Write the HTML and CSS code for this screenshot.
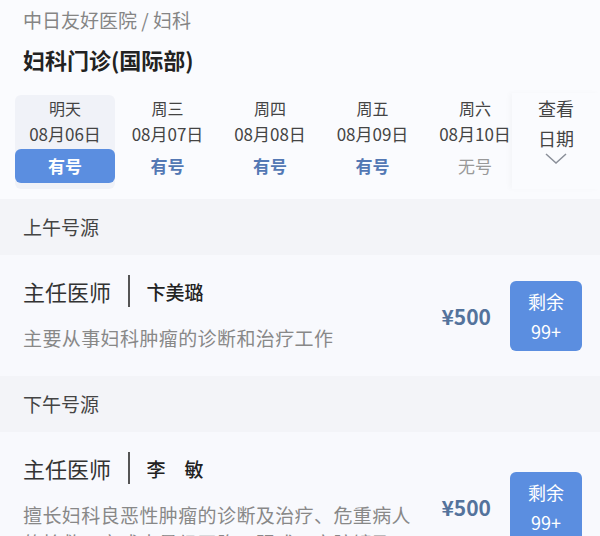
FILE: index.html
```html
<!DOCTYPE html>
<html lang="zh-CN">
  <head>
    <meta charset="UTF-8">
    <title>妇科门诊(国际部)</title>
    <meta name="viewport" content="width=device-width, initial-scale=1">
    <link rel="stylesheet" href="styles.css">
  </head>
  <body>
    <div class="top">
      <div class="crumb">中日友好医院 / 妇科</div>
      <h1 class="title">妇科门诊(国际部)</h1>

      <div class="dates">
        <div class="day-list">
          <div class="day active">
            <div class="week">明天</div>
            <div class="date">08月06日</div>
            <div class="status">有号</div>
          </div>
          <div class="day">
            <div class="week">周三</div>
            <div class="date">08月07日</div>
            <div class="status">有号</div>
          </div>
          <div class="day">
            <div class="week">周四</div>
            <div class="date">08月08日</div>
            <div class="status">有号</div>
          </div>
          <div class="day">
            <div class="week">周五</div>
            <div class="date">08月09日</div>
            <div class="status">有号</div>
          </div>
          <div class="day">
            <div class="week">周六</div>
            <div class="date">08月10日</div>
            <div class="status none">无号</div>
          </div>
        </div>
        <div class="more">
          <div>查看</div>
          <div>日期</div>
          <svg width="22" height="11" viewBox="0 0 22 11">
            <path d="M1 1 L11 10 L21 1" fill="none" stroke="#8a8f99" stroke-width="1.5"/>
          </svg>
        </div>
      </div>
    </div>

    <div class="section">上午号源</div>
    <div class="card">
      <div class="info">
        <div class="doctor">
          <span class="rank">主任医师</span>
          <span class="divider"></span>
          <span class="name">卞美璐</span>
        </div>
        <p class="desc">主要从事妇科肿瘤的诊断和治疗工作</p>
      </div>
      <div class="price">¥500</div>
      <button type="button" class="remain">剩余<br>99+</button>
    </div>

    <div class="section">下午号源</div>
    <div class="card">
      <div class="info">
        <div class="doctor">
          <span class="rank">主任医师</span>
          <span class="divider"></span>
          <span class="name">李　敏</span>
        </div>
        <p class="desc">擅长妇科良恶性肿瘤的诊断及治疗、危重病人的抢救，完成大量经开腹、阴式、宫腔镜及腹腔镜手术</p>
      </div>
      <div class="price">¥500</div>
      <button type="button" class="remain">剩余<br>99+</button>
    </div>
  </body>
</html>
```

FILE: styles.css
```css
body {
  margin: 0;
  background: #f8f9fd;
  font-family: "Noto Sans CJK SC", "Noto Sans", sans-serif;
  color: #333;
  overflow: hidden;
}

.top {
  background: #fafbfe;
  padding-top: 8px;
  padding-bottom: 10px;
}

.crumb {
  padding-left: 23px;
  font-size: 19px;
  line-height: 24px;
  color: #858585;
}

.title {
  margin: 12px 0 0;
  padding-left: 23px;
  font-size: 22px;
  line-height: 30px;
  font-weight: 700;
  color: #222;
}

.dates {
  display: flex;
  margin-top: 21px;
}

.day-list {
  flex: 1;
  display: flex;
  gap: 2.5px;
  padding-left: 15px;
  overflow: hidden;
}

.day {
  flex: none;
  width: 100px;
  text-align: center;
  border-radius: 6px;
}

.day.active {
  background: #f0f2f8;
}

.week {
  font-size: 16px;
  line-height: 26px;
  color: #444;
}

.date {
  font-size: 17px;
  line-height: 26px;
  color: #444;
}

.status {
  margin-top: 2px;
  height: 34px;
  line-height: 34px;
  font-size: 17px;
  font-weight: 700;
  color: #5378b4;
  border-radius: 6px;
}

.day.active .status {
  background: #5b8ee0;
  color: #fff;
}

.status.none {
  font-weight: 400;
  color: #999;
}

.more {
  flex: none;
  width: 88px;
  height: 96px;
  margin-top: -2px;
  text-align: center;
  font-size: 18px;
  line-height: 30px;
  color: #444;
  background: #fafbfe;
  box-shadow: -3px 0 5px rgba(0, 0, 0, 0.025);
}

.more svg {
  display: block;
  margin: 0 auto;
}

.section {
  height: 56px;
  line-height: 56px;
  padding-left: 23px;
  font-size: 19px;
  color: #444;
  background: #f3f4f8;
}

.card {
  display: flex;
  align-items: center;
  padding: 24px 18px 24px 23px;
}

.info {
  flex: 1;
  min-width: 0;
}

.doctor {
  display: flex;
  align-items: center;
  height: 24px;
}

.rank {
  font-size: 22px;
  color: #333;
}

.divider {
  width: 1.5px;
  height: 32px;
  margin: 0 17px;
  background: #555;
}

.name {
  font-size: 19px;
  font-weight: 500;
  color: #222;
}

.desc {
  margin: 21px 0 0;
  font-size: 19px;
  line-height: 28px;
  letter-spacing: 0.4px;
  color: #888;
  display: -webkit-box;
  -webkit-line-clamp: 2;
  -webkit-box-orient: vertical;
  overflow: hidden;
}

.price {
  margin: 0 19px 0 20px;
  font-size: 21px;
  font-weight: 700;
  color: #54739c;
}

.remain {
  flex: none;
  width: 72px;
  height: 70px;
  padding: 0;
  border: 0;
  border-radius: 6px;
  background: #5b8ee0;
  color: #fff;
  font-family: inherit;
  font-size: 18px;
  line-height: 30px;
  cursor: pointer;
}
```
